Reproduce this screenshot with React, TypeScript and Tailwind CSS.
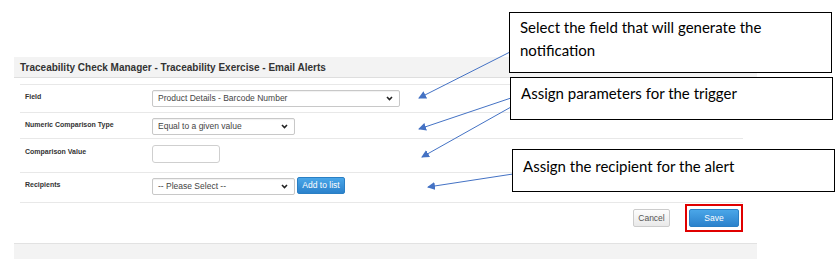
import React from "react";

function Chevron() {
  return (
    <svg width="7" height="5" viewBox="0 0 7 5" className="shrink-0">
      <path d="M1 1 L3.5 3.5 L6 1" fill="none" stroke="#222" strokeWidth="1.6" />
    </svg>
  );
}

function FakeSelect({ text, w }: { text: string; w: string }) {
  return (
    <div
      className={`${w} h-[17px] border border-[#c8c8c8] rounded-[2px] bg-white flex items-center justify-between pl-[5px] pr-[6px] text-[8.5px] text-[#444] shadow-[inset_0_1px_1px_rgba(0,0,0,0.06)]`}
    >
      <span>{text}</span>
      <Chevron />
    </div>
  );
}

function Row({
  label,
  children,
  h,
  pt,
  cpt,
}: {
  label: string;
  children: React.ReactNode;
  h: string;
  pt: string;
  cpt: string;
}) {
  return (
    <div className={`flex border-t border-[#e8e8e8] ${h}`}>
      <div className={`w-[132px] pl-[5px] ${pt} text-[7px] font-bold text-[#333]`}>{label}</div>
      <div className={`flex gap-[2px] ${cpt}`}>{children}</div>
    </div>
  );
}

function Callout({
  className,
  children,
}: {
  className: string;
  children: React.ReactNode;
}) {
  return (
    <div
      className={`absolute bg-white border border-black text-[15px] leading-[23px] text-black font-['Lato','Open_Sans',sans-serif] pl-[10px] ${className}`}
    >
      {children}
    </div>
  );
}

export default function App() {
  return (
    <div className="relative w-[836px] h-[266px] bg-white overflow-hidden font-['Liberation_Sans',Arial,sans-serif]">
      <div className="pt-[57px] pl-[14px]">
        <div className="w-[743px]">
          <div className="h-[21px] bg-[#f3f3f3] border-b border-[#dedede] flex items-center pl-[6px] text-[10px] font-bold text-[#333]">
            Traceability Check Manager - Traceability Exercise - Email Alerts
          </div>
          <div className="ml-[6px] w-[723px] mt-[6px]">
            <Row label="Field" h="h-[28px]" pt="pt-[7px]" cpt="pt-[5px]">
              <FakeSelect text="Product Details - Barcode Number" w="w-[248px]" />
            </Row>
            <Row label="Numeric Comparison Type" h="h-[26px]" pt="pt-[7px]" cpt="pt-[5px]">
              <FakeSelect text="Equal to a given value" w="w-[143px]" />
            </Row>
            <Row label="Comparison Value" h="h-[34px]" pt="pt-[8px]" cpt="pt-[6px]">
              <div className="w-[68px] h-[18px] border border-[#cfcfcf] rounded-[3px] bg-white" />
            </Row>
            <Row label="Recipients" h="h-[30px]" pt="pt-[7px]" cpt="pt-[5px]">
              <FakeSelect text="-- Please Select --" w="w-[143px]" />
              <div className="w-[48px] h-[17px] -mt-[1px] rounded-[2px] border border-[#2a7fc4] bg-gradient-to-b from-[#4aa6e8] to-[#2b82cc] text-white text-[8.5px] flex items-center justify-center">
                Add to list
              </div>
            </Row>
            <div className="border-t border-[#e8e8e8] flex justify-end items-start pt-[1px] gap-[15px]">
              <div className="mt-[5px] w-[37px] h-[18px] rounded-[2px] border border-[#cccccc] bg-gradient-to-b from-[#fdfdfd] to-[#e9e9e9] text-[#555] text-[8.5px] flex items-center justify-center">
                Cancel
              </div>
              <div className="border-2 border-[#e00000] px-[2px] pt-[3px] pb-[3px]">
                <div className="w-[50px] h-[18px] rounded-[2px] border border-[#2a7fc4] bg-gradient-to-b from-[#4aa6e8] to-[#2b82cc] text-white text-[8.5px] flex items-center justify-center">
                  Save
                </div>
              </div>
            </div>
          </div>
          <div className="mt-[11px] h-[16px] bg-[#f3f3f3] border-t border-[#e2e2e2]" />
        </div>
      </div>

      <svg className="absolute left-0 top-0" width="836" height="266" viewBox="0 0 836 266">
        <defs>
          <marker id="ah" markerWidth="8" markerHeight="8" refX="7" refY="4" orient="auto" markerUnits="userSpaceOnUse">
            <path d="M0 0 L8 4 L0 8 Z" fill="#4472c4" />
          </marker>
        </defs>
        <g stroke="#4472c4" strokeWidth="1" fill="none">
          <line x1="510" y1="52" x2="419" y2="98" markerEnd="url(#ah)" />
          <line x1="511" y1="98" x2="419" y2="129" markerEnd="url(#ah)" />
          <line x1="511" y1="107" x2="422" y2="157" markerEnd="url(#ah)" />
          <line x1="513" y1="174" x2="428" y2="187" markerEnd="url(#ah)" />
        </g>
      </svg>

      <Callout className="left-[509px] top-[12px] w-[323px] h-[61px] pt-[3px]">
        Select the field that will generate the
        <br />
        notification
      </Callout>
      <Callout className="left-[510px] top-[77px] w-[323px] h-[43px] pt-[4px]">
        Assign parameters for the trigger
      </Callout>
      <Callout className="left-[512px] top-[149px] w-[323px] h-[43px] pt-[5px]">
        Assign the recipient for the alert
      </Callout>
    </div>
  );
}
